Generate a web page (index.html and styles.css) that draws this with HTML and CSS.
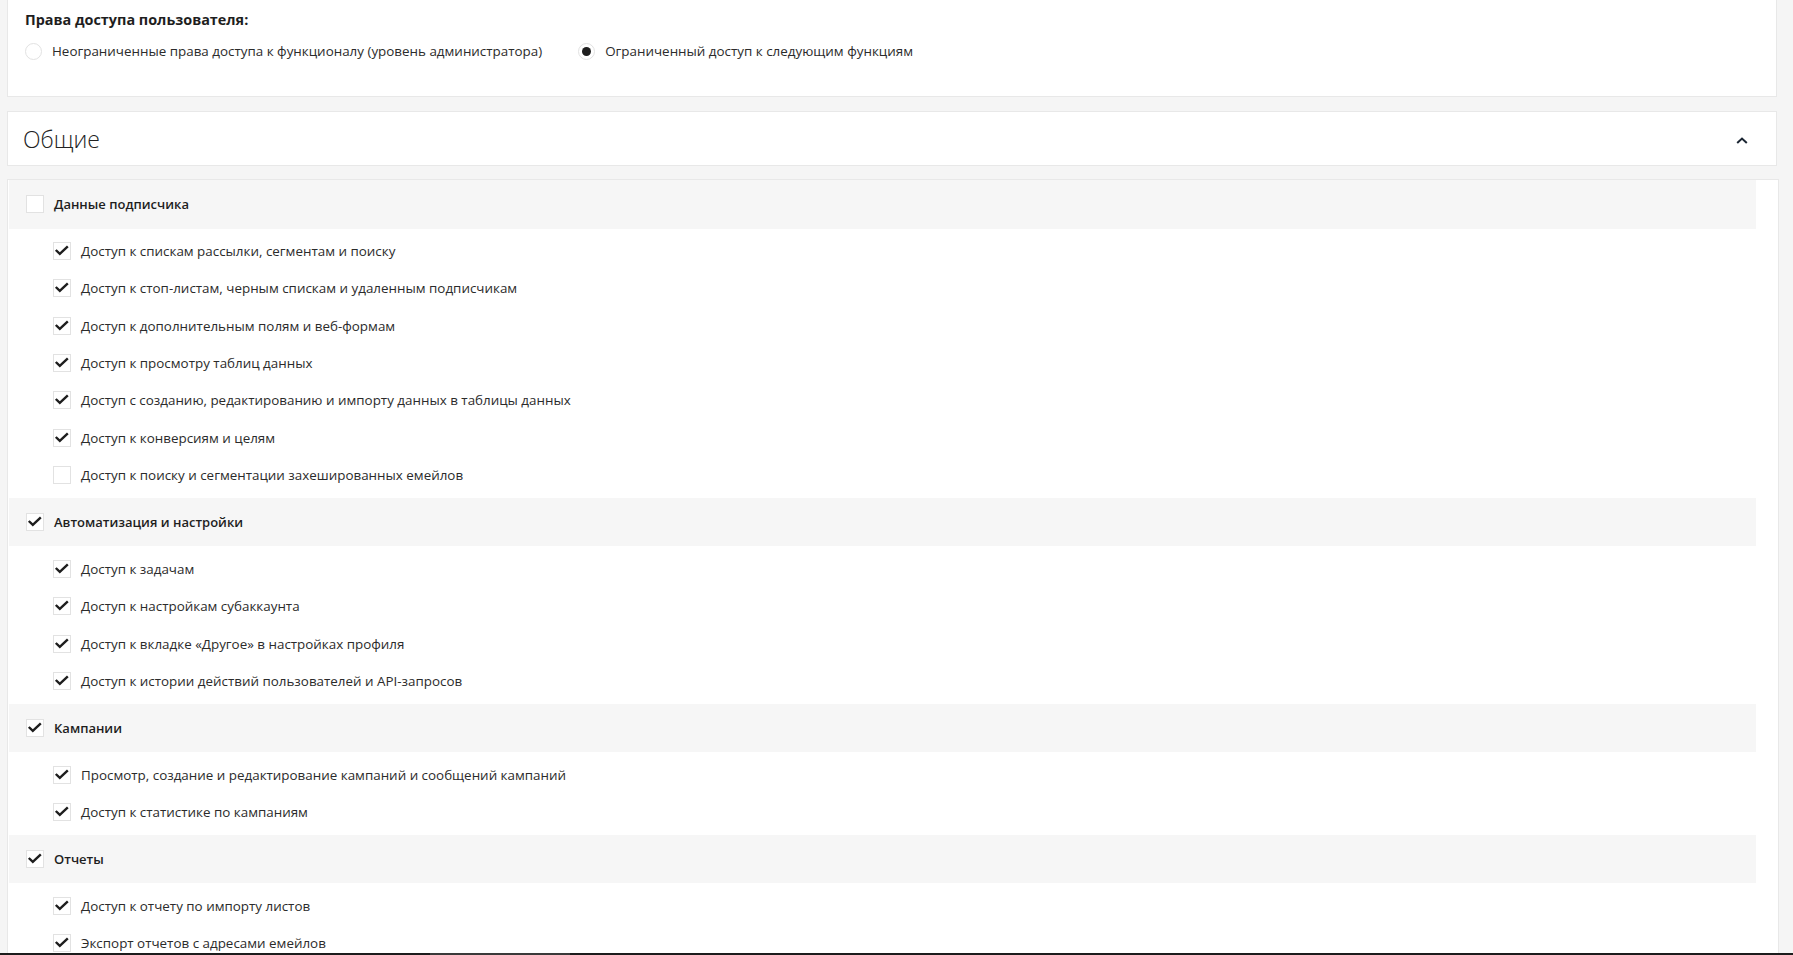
FILE: index.html
```html
<!DOCTYPE html>
<html lang="ru">
<head>
    <meta charset="UTF-8">
    <meta name="viewport" content="width=device-width, initial-scale=1.0">
    <title>Права доступа пользователя</title>
    <link rel="stylesheet" href="styles.css">
</head>
<body>
    <div class="page">
        <section class="card access-card">
            <h3 class="access-title">Права доступа пользователя:</h3>
            <div class="radio-row">
                <label class="radio-option">
                    <span class="radio"></span>
                    <span>Неограниченные права доступа к функционалу (уровень администратора)</span>
                </label>
                <label class="radio-option">
                    <span class="radio checked"></span>
                    <span>Ограниченный доступ к следующим функциям</span>
                </label>
            </div>
        </section>

        <section class="card section-head">
            <h2 class="section-title">Общие</h2>
            <svg class="chevron" width="12" height="7" viewBox="0 0 12 7">
                <polyline points="1.2,6 6,1.5 10.8,6" fill="none" stroke="#1b2633" stroke-width="2"/>
            </svg>
        </section>

        <section class="groups">
            <div class="group">
                <div class="group-head">
                    <span class="box"></span>
                    <span>Данные подписчика</span>
                </div>
                <ul class="group-list">
                    <li class="item"><span class="box on"></span>Доступ к спискам рассылки, сегментам и поиску</li>
                    <li class="item"><span class="box on"></span>Доступ к стоп-листам, черным спискам и удаленным подписчикам</li>
                    <li class="item"><span class="box on"></span>Доступ к дополнительным полям и веб-формам</li>
                    <li class="item"><span class="box on"></span>Доступ к просмотру таблиц данных</li>
                    <li class="item"><span class="box on"></span>Доступ с созданию, редактированию и импорту данных в таблицы данных</li>
                    <li class="item"><span class="box on"></span>Доступ к конверсиям и целям</li>
                    <li class="item"><span class="box"></span>Доступ к поиску и сегментации захешированных емейлов</li>
                </ul>
            </div>

            <div class="group">
                <div class="group-head">
                    <span class="box on"></span>
                    <span>Автоматизация и настройки</span>
                </div>
                <ul class="group-list">
                    <li class="item"><span class="box on"></span>Доступ к задачам</li>
                    <li class="item"><span class="box on"></span>Доступ к настройкам субаккаунта</li>
                    <li class="item"><span class="box on"></span>Доступ к вкладке «Другое» в настройках профиля</li>
                    <li class="item"><span class="box on"></span>Доступ к истории действий пользователей и API-запросов</li>
                </ul>
            </div>

            <div class="group">
                <div class="group-head">
                    <span class="box on"></span>
                    <span>Кампании</span>
                </div>
                <ul class="group-list">
                    <li class="item"><span class="box on"></span>Просмотр, создание и редактирование кампаний и сообщений кампаний</li>
                    <li class="item"><span class="box on"></span>Доступ к статистике по кампаниям</li>
                </ul>
            </div>

            <div class="group">
                <div class="group-head">
                    <span class="box on"></span>
                    <span>Отчеты</span>
                </div>
                <ul class="group-list">
                    <li class="item"><span class="box on"></span>Доступ к отчету по импорту листов</li>
                    <li class="item"><span class="box on"></span>Экспорт отчетов с адресами емейлов</li>
                </ul>
            </div>
        </section>
    </div>

    <div class="bottom-bar"><span class="bottom-thumb"></span></div>

    <script>
        // draw the tick inside every checked box
        document.querySelectorAll('.box.on').forEach(function(box) {
            box.innerHTML = '<svg width="18" height="18" viewBox="0 0 18 18">' +
                '<polyline points="2.8,8 6.8,11.9 14.8,4.3" fill="none" stroke="#1e1e1e" stroke-width="2.4"/></svg>';
        });
    </script>
</body>
</html>
```

FILE: styles.css
```css
:root {
    --page-bg: #f5f5f5;
    --row-bg: #f6f6f6;
    --border: #e8e8e8;
    --box-border: #e2e2e2;
    --text: #2b2b2b;
    --title: #1e1e1e;
}

* {
    margin: 0;
    padding: 0;
    box-sizing: border-box;
}

html {
    overflow: hidden;
}

body {
    background-color: var(--page-bg);
    color: var(--text);
    font-family: 'Open Sans', 'Noto Sans', sans-serif;
    font-size: 13.4px;
    line-height: 18px;
}

.page {
    padding: 0 16px 0 7px;
}

.card {
    background-color: #fff;
    border: 1px solid var(--border);
}

.access-card {
    border-top: none;
    padding: 11px 17px 36px;
}

.access-title {
    font-size: 14.4px;
    font-weight: 700;
    color: var(--title);
}

.radio-row {
    display: flex;
    margin-top: 13px;
}

.radio-option {
    display: flex;
    align-items: center;
    gap: 10px;
    margin-right: 36px;
    cursor: pointer;
}

.radio {
    width: 17px;
    height: 17px;
    border: 1px solid var(--box-border);
    border-radius: 50%;
    background-color: #fff;
    display: flex;
    align-items: center;
    justify-content: center;
}

.radio.checked::after {
    content: '';
    width: 9px;
    height: 9px;
    border-radius: 50%;
    background-color: #1e1e1e;
}

.section-head {
    margin-top: 14px;
    height: 55px;
    display: flex;
    align-items: center;
    justify-content: space-between;
    padding: 0 28px 0 15px;
}

.section-title {
    font-size: 23px;
    font-weight: 300;
    line-height: 30px;
    color: #222;
}

.chevron {
    margin-top: 4px;
}

.groups {
    margin-top: 13px;
    margin-right: -2px;
    background-color: #fff;
    border: 1px solid var(--border);
    padding: 0 22px 0 1px;
}

.group-head {
    height: 48.5px;
    background-color: var(--row-bg);
    display: flex;
    align-items: center;
    gap: 10px;
    padding-left: 17px;
    font-size: 13px;
    font-weight: 600;
    color: var(--title);
}

.group-list {
    list-style: none;
    padding: 4px 0;
}

.item {
    height: 37.33px;
    display: flex;
    align-items: center;
    gap: 10px;
    padding-left: 44px;
}

.box {
    width: 18px;
    height: 18px;
    flex-shrink: 0;
    border: 1px solid var(--box-border);
    background-color: #fff;
    display: flex;
    align-items: center;
    justify-content: center;
}

.box svg {
    display: block;
    margin: -1px;
}

.bottom-bar {
    position: fixed;
    left: 0;
    right: 0;
    bottom: 0;
    height: 2px;
    background-color: #1c1c1c;
}

.bottom-thumb {
    display: block;
    width: 140px;
    height: 2px;
    margin-left: 430px;
    background-color: #3a3a3a;
}
```
